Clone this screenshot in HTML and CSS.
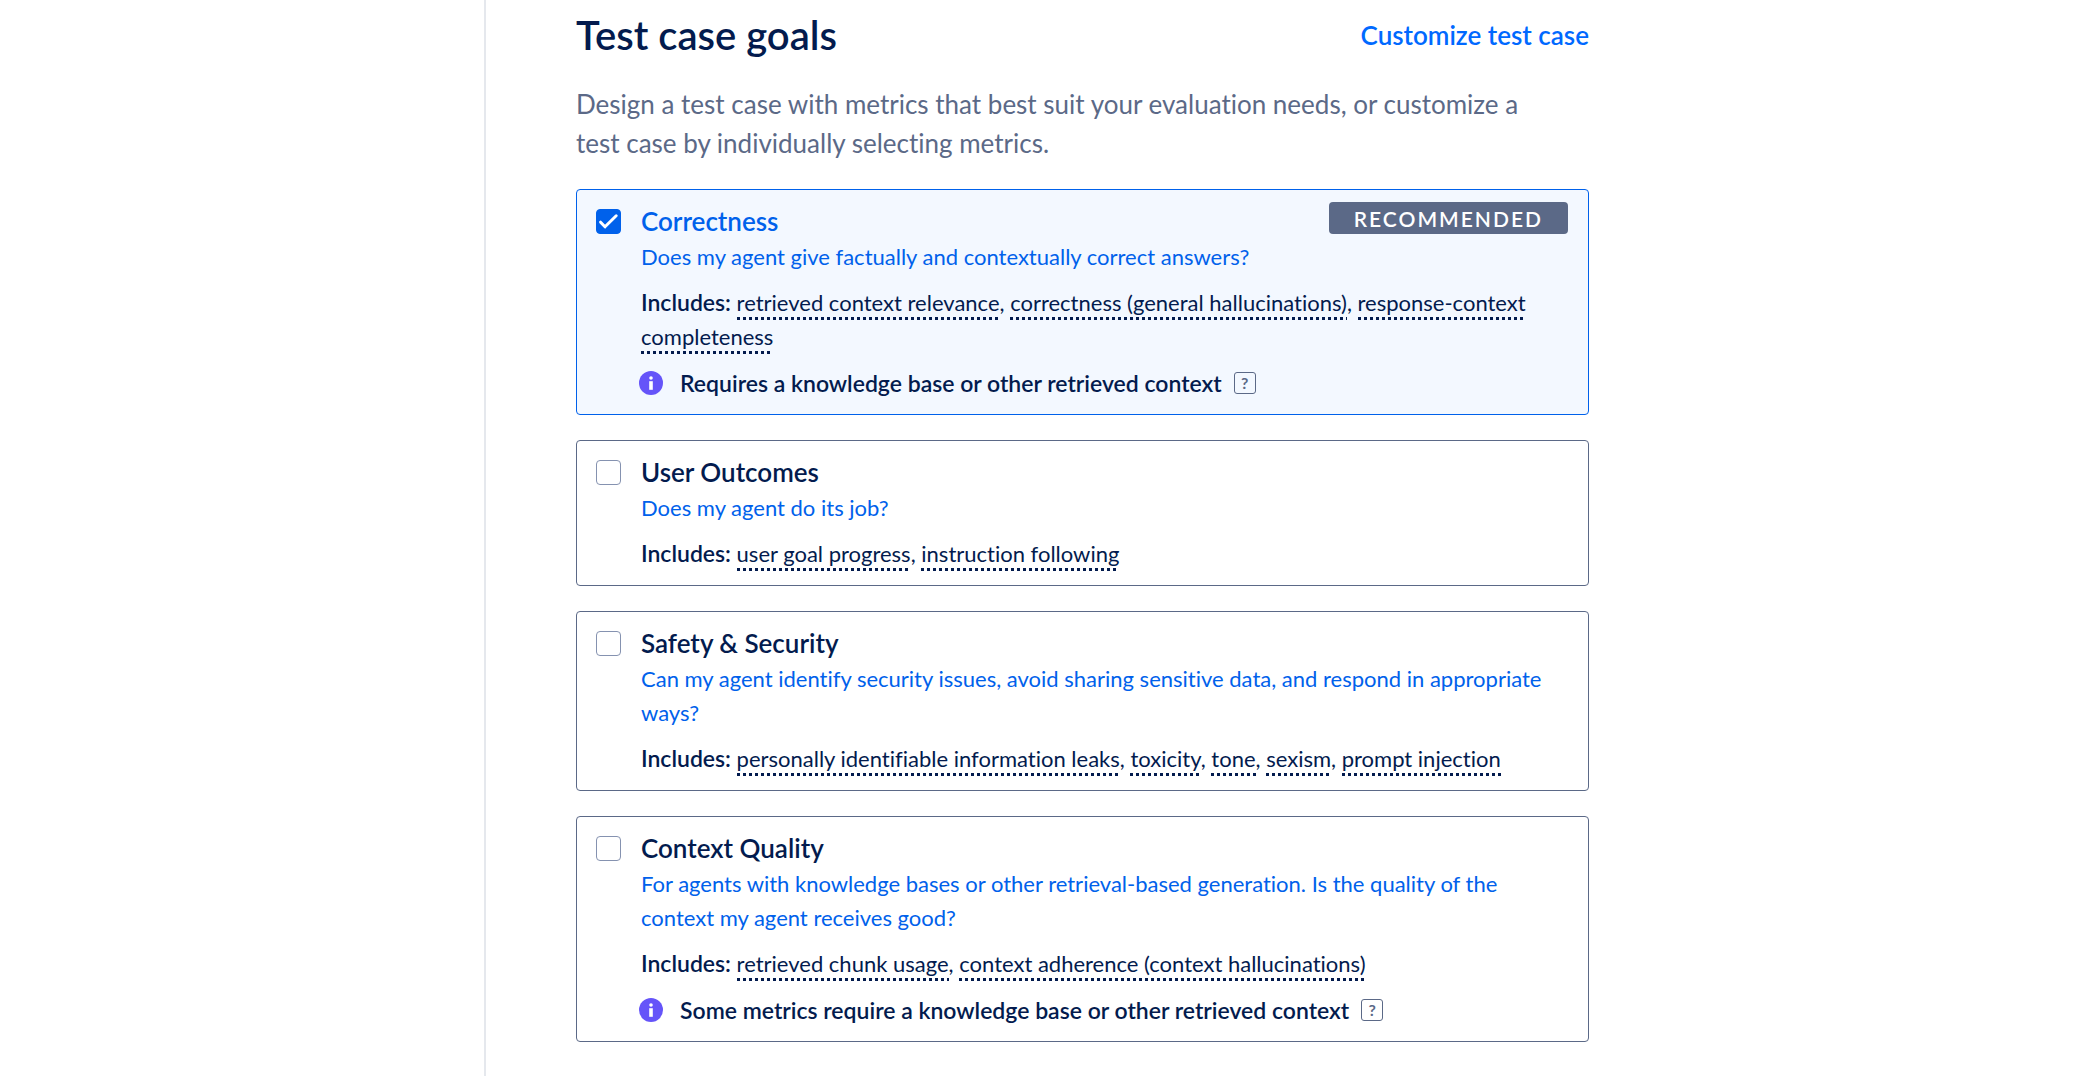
FILE: index.html
```html
<!DOCTYPE html>
<html lang="en">
  <head>
    <meta charset="UTF-8" />
    <meta name="viewport" content="width=device-width, initial-scale=1.0" />
    <title>Test case goals</title>
    <link rel="stylesheet" href="styles.css">
  </head>
  <body>
    <div class="page">
      <main class="content">
        <header class="top">
          <h1>Test case goals</h1>
          <a href="#customize" class="customize">Customize test case</a>
        </header>
        <p class="intro">Design a test case with metrics that best suit your evaluation needs, or customize a<br />test case by individually selecting metrics.</p>

        <form class="goals">
          <section class="goal selected">
            <span class="check">
              <input type="checkbox" id="correctness" checked />
              <svg viewBox="0 0 25 25"><path d="M4.6 13.2L9 17.8L20.2 6.8" /></svg>
            </span>
            <div class="body">
              <label for="correctness">Correctness</label>
              <p class="question">Does my agent give factually and contextually correct answers?</p>
              <p class="includes"><b>Includes:</b> <span class="metric">retrieved context relevance</span>, <span class="metric">correctness (general hallucinations)</span>, <span class="metric">response-context<br />completeness</span></p>
              <p class="note">
                <svg class="info" viewBox="0 0 24 24"><circle cx="12" cy="12" r="12" /><circle class="mark" cx="12" cy="7" r="1.8" /><path class="mark" d="M10.2 10.2h3.6v8.6h-3.6z" /></svg>
                <span>Requires a knowledge base or other retrieved context</span>
                <button type="button" class="help" aria-label="More about retrieved context">?</button>
              </p>
            </div>
            <span class="badge">RECOMMENDED</span>
          </section>

          <section class="goal">
            <span class="check"><input type="checkbox" id="outcomes" /></span>
            <div class="body">
              <label for="outcomes">User Outcomes</label>
              <p class="question">Does my agent do its job?</p>
              <p class="includes"><b>Includes:</b> <span class="metric">user goal progress</span>, <span class="metric">instruction following</span></p>
            </div>
          </section>

          <section class="goal">
            <span class="check"><input type="checkbox" id="safety" /></span>
            <div class="body">
              <label for="safety">Safety &amp; Security</label>
              <p class="question">Can my agent identify security issues, avoid sharing sensitive data, and respond in appropriate<br />ways?</p>
              <p class="includes"><b>Includes:</b> <span class="metric">personally identifiable information leaks</span>, <span class="metric">toxicity</span>, <span class="metric">tone</span>, <span class="metric">sexism</span>, <span class="metric">prompt injection</span></p>
            </div>
          </section>

          <section class="goal">
            <span class="check"><input type="checkbox" id="context" /></span>
            <div class="body">
              <label for="context">Context Quality</label>
              <p class="question">For agents with knowledge bases or other retrieval-based generation. Is the quality of the<br />context my agent receives good?</p>
              <p class="includes"><b>Includes:</b> <span class="metric">retrieved chunk usage</span>, <span class="metric">context adherence (context hallucinations)</span></p>
              <p class="note">
                <svg class="info" viewBox="0 0 24 24"><circle cx="12" cy="12" r="12" /><circle class="mark" cx="12" cy="7" r="1.8" /><path class="mark" d="M10.2 10.2h3.6v8.6h-3.6z" /></svg>
                <span>Some metrics require a knowledge base or other retrieved context</span>
                <button type="button" class="help" aria-label="More about retrieved context">?</button>
              </p>
            </div>
          </section>
        </form>
      </main>
    </div>
  </body>
</html>
```
FILE: styles.css
```css
* {
  box-sizing: border-box;
}
body {
  margin: 0;
  background-color: #fff;
  color: #031b4e;
  font-family: Lato, "Liberation Sans", sans-serif;
  font-size: 22px;
  line-height: 34px;
  font-variant-ligatures: none;
}
h1,
p {
  margin: 0;
}
.page {
  min-height: 100vh;
  margin-left: 484px;
  padding: 12px 90px 32px;
  border-left: 2px solid #e5e8ed;
}
.content {
  max-width: 1013px;
}
.top {
  display: flex;
  justify-content: space-between;
  align-items: center;
}
h1 {
  font-size: 40px;
  line-height: 46px;
  font-weight: 600;
}
.customize {
  color: #0069ff;
  font-size: 26px;
  font-weight: 600;
  text-decoration: none;
}
.intro {
  margin: 27px 0 26px;
  color: #5b6987;
  font-size: 26px;
  line-height: 39px;
}
.goals {
  display: flex;
  flex-direction: column;
  gap: 25px;
}
.goal {
  position: relative;
  display: flex;
  gap: 20px;
  padding: 14px 19px;
  border: 1px solid #5b6987;
  border-radius: 4px;
}
.goal.selected {
  border-color: #0061eb;
  background-color: #f3f8ff;
}
.check {
  position: relative;
  flex: none;
  width: 25px;
  height: 25px;
  margin-top: 5px;
}
.check input {
  display: block;
  appearance: none;
  width: 25px;
  height: 25px;
  margin: 0;
  border: 1px solid #8592b0;
  border-radius: 4px;
  background-color: #fff;
}
.check input:checked {
  border-color: #0061eb;
  background-color: #0061eb;
}
.check svg {
  position: absolute;
  inset: 0;
  fill: none;
  stroke: #fff;
  stroke-width: 3;
  stroke-linecap: round;
  stroke-linejoin: round;
  pointer-events: none;
}
.body {
  flex: 1;
}
label {
  display: block;
  margin-bottom: 2px;
  font-size: 26px;
  font-weight: 600;
}
.selected label {
  color: #0061eb;
}
.question {
  color: #0061eb;
}
.includes,
.note {
  margin-top: 12px;
}
b {
  font-size: 23px;
  line-height: 1;
  font-weight: 600;
}
/* square dots under each metric name */
.metric {
  padding-bottom: 4px;
  background: repeating-linear-gradient(to right, #031b4e 0 3px, transparent 3px 6px) left bottom / 100% 3px no-repeat;
}
.note {
  display: flex;
  align-items: center;
  font-size: 23px;
  font-weight: 600;
}
.info {
  width: 24px;
  height: 24px;
  margin: 0 17px 0 -2px;
  fill: #6554f9;
}
.info .mark {
  fill: #fff;
}
.help {
  width: 22px;
  height: 22px;
  margin-left: 12px;
  padding: 0;
  border: 1px solid #5b6987;
  border-radius: 3px;
  background: none;
  color: #5b6987;
  font: bold 16px/20px Lato, "Liberation Sans", sans-serif;
}
.badge {
  position: absolute;
  top: 12px;
  right: 20px;
  padding: 2px 25px 0;
  border-radius: 4px;
  background-color: #5b6987;
  color: #fff;
  font-size: 21px;
  line-height: 30px;
  font-weight: 600;
  letter-spacing: 2px;
}
```
